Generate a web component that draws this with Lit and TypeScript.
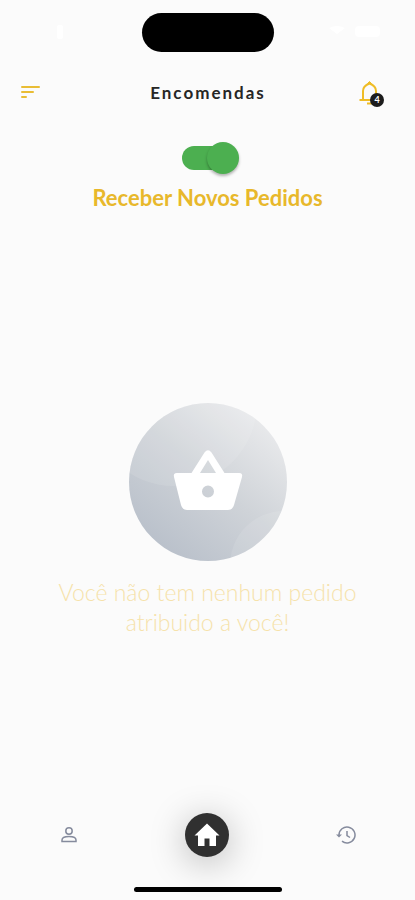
import { LitElement, html, css } from "lit";
import { customElement, state } from "lit/decorators.js";

@customElement("app-root")
export class AppRoot extends LitElement {
  @state() private accepting = true;

  static styles = css`
    :host {
      display: flex;
      flex-direction: column;
      min-height: 100vh;
      box-sizing: border-box;
      background: #fbfbfb;
      color: #262626;
      font-family: Lato, "Open Sans", sans-serif;
    }
    svg {
      display: block;
    }
    button {
      border: 0;
      padding: 0;
      background: none;
      font: inherit;
      color: inherit;
      cursor: pointer;
    }
    .status,
    .header {
      display: grid;
      grid-template-columns: 1fr auto 1fr;
      align-items: center;
    }
    .status {
      height: 40px;
      padding: 12px 32px 0;
      color: #ffffff;
    }
    .clock {
      width: 40px;
      height: 16px;
      margin-left: 24px;
    }
    .island {
      width: 132px;
      height: 39px;
      border-radius: 20px;
      background: #000000;
    }
    .signals {
      justify-self: end;
    }
    .header {
      height: 48px;
      margin-top: 17px;
      padding: 0 31px 0 20px;
    }
    .header .bell {
      justify-self: end;
    }
    .menu {
      justify-self: start;
      color: #e9bd35;
    }
    h1 {
      margin: 0 0 0 12px;
      font-size: 17px;
      line-height: 24px;
      font-weight: 700;
      letter-spacing: 2px;
    }
    .bell {
      position: relative;
      color: #efbd27;
    }
    .badge {
      position: absolute;
      right: 0;
      bottom: 0;
      width: 14px;
      height: 14px;
      border-radius: 50%;
      background: #1c1c1c;
      color: #ffffff;
      font-size: 9px;
      line-height: 14px;
      font-weight: 700;
      text-align: center;
    }
    .receive {
      display: flex;
      flex-direction: column;
      align-items: center;
      gap: 12px;
      margin-top: 25px;
      color: #e8b82b;
      font-size: 22px;
      line-height: 24px;
      font-weight: 700;
    }
    .switch {
      appearance: none;
      display: flex;
      align-items: center;
      width: 52px;
      height: 24px;
      margin: 4px 0;
      border-radius: 12px;
      background: #b5b5b5;
      cursor: pointer;
    }
    .switch::before {
      content: "";
      width: 32px;
      height: 32px;
      margin: 0 -5px;
      flex: none;
      border-radius: 50%;
      background: #f5f5f5;
      box-shadow: 0 2px 3px rgba(0, 0, 0, 0.3);
    }
    .switch:checked {
      justify-content: flex-end;
      background: #4caf50;
    }
    .switch:checked::before {
      background: #4caf50;
    }
    .empty {
      flex: 1;
      display: flex;
      flex-direction: column;
      align-items: center;
      justify-content: center;
      gap: 16px;
      padding: 16px 48px 0;
    }
    .empty p {
      margin: 0;
      color: #f6e2aa;
      font-size: 23px;
      line-height: 30px;
      font-weight: 300;
      text-align: center;
    }
    .nav {
      display: grid;
      grid-template-columns: repeat(3, 1fr);
      align-items: center;
      justify-items: center;
      height: 44px;
      color: #858b9d;
    }
    .home {
      display: grid;
      place-items: center;
      width: 44px;
      height: 44px;
      border-radius: 50%;
      background: #303030;
      color: #ffffff;
      box-shadow: 0 6px 36px rgba(0, 0, 0, 0.28);
    }
    .indicator {
      width: 148px;
      height: 5px;
      margin: 30px auto 8px;
      border-radius: 3px;
      background: #000000;
    }
  `;

  private toggle(e: Event) {
    this.accepting = (e.target as HTMLInputElement).checked;
  }

  render() {
    return html`
      <div class="status" aria-hidden="true">
        <svg class="clock" viewBox="0 0 40 16" fill="currentColor">
          <rect x="1" y="1" width="6" height="14" rx="2" />
        </svg>
        <div class="island"></div>
        <svg class="signals" width="54" height="14" viewBox="0 0 54 14" fill="currentColor">
          <path d="M0 3Q8-1 16 3L8 9Z" />
          <rect x="26" y="1" width="25" height="11" rx="4" />
        </svg>
      </div>

      <header class="header">
        <button class="menu" aria-label="Menu">
          <svg width="20" height="24" viewBox="0 0 20 24" fill="currentColor">
            <rect x="1" y="5" width="19" height="2" rx="1" />
            <rect x="1" y="10" width="13" height="2" rx="1" />
            <rect x="1" y="15" width="6" height="2" rx="1" />
          </svg>
        </button>
        <h1>Encomendas</h1>
        <button class="bell" aria-label="Notificações">
          <svg width="25" height="28" viewBox="0 0 25 28" fill="none" stroke="currentColor" stroke-width="2">
            <path d="M0.500 21H19M4 21V12C4 8 6.500 6 10.500 4.500C14.500 6 17 8 17 12V21" />
            <path d="M8.500 4.500L10.500 2.500L12.500 4.500Z" fill="currentColor" stroke-width="1" />
            <path d="M8 24.500H13" />
          </svg>
          <span class="badge">4</span>
        </button>
      </header>

      <label class="receive">
        <input class="switch" type="checkbox" role="switch" .checked=${this.accepting} @change=${this.toggle} />
        Receber Novos Pedidos
      </label>

      <main class="empty">
        <svg width="158" height="158" viewBox="0 0 158 158" aria-hidden="true">
          <defs>
            <linearGradient id="disc" x1="0.2" y1="0.9" x2="0.85" y2="0.1">
              <stop offset="0" stop-color="#bac1cb" />
              <stop offset="0.5" stop-color="#cfd3d8" />
              <stop offset="1" stop-color="#e9eaec" />
            </linearGradient>
            <clipPath id="round"><circle cx="79" cy="79" r="79" /></clipPath>
          </defs>
          <g clip-path="url(#round)">
            <rect width="158" height="158" fill="url(#disc)" />
            <circle cx="45" cy="0" r="83" fill="#ffffff" fill-opacity="0.1" />
            <circle cx="155" cy="162" r="54" fill="#ffffff" fill-opacity="0.1" />
          </g>
          <path
            fill="#ffffff"
            fill-rule="evenodd"
            d="M48 70H62.500L75.500 49.500Q79 45 82.500 49.500L95.500 70H110Q114 70 113 74L105 102Q103.500 107 99 107H58Q53.500 107 52 102L45 74Q44 70 48 70ZM71 70H87L79 57ZM79 82.500A6 6 0 1 0 79 94.500A6 6 0 1 0 79 82.500Z"
          />
        </svg>
        <p>Você não tem nenhum pedido atribuido a você!</p>
      </main>

      <nav class="nav">
        <button aria-label="Perfil">
          <svg width="20" height="20" viewBox="0 0 20 20" fill="none" stroke="currentColor" stroke-width="1.500">
            <circle cx="10" cy="6" r="3.200" />
            <path d="M3 16.500V15C3 12.500 6.500 11.500 10 11.500S17 12.500 17 15V16.500Z" />
          </svg>
        </button>
        <button class="home" aria-label="Início">
          <svg width="26" height="26" viewBox="0 0 26 26" fill="currentColor">
            <path d="M13 1.500L25.500 13.500H22V24H15.500V16.500H10.500V24H4V13.500H0.500Z" />
          </svg>
        </button>
        <button aria-label="Histórico">
          <svg width="20" height="20" viewBox="0 0 20 20" fill="none" stroke="currentColor" stroke-width="1.500">
            <path d="M3 10A8 8 0 1 1 6 16.200" />
            <path d="M11 6V10.500L14 12.500" />
            <path d="M0 9.500H6L3 12.500Z" fill="currentColor" stroke="none" />
          </svg>
        </button>
      </nav>
      <div class="indicator"></div>
    `;
  }
}
